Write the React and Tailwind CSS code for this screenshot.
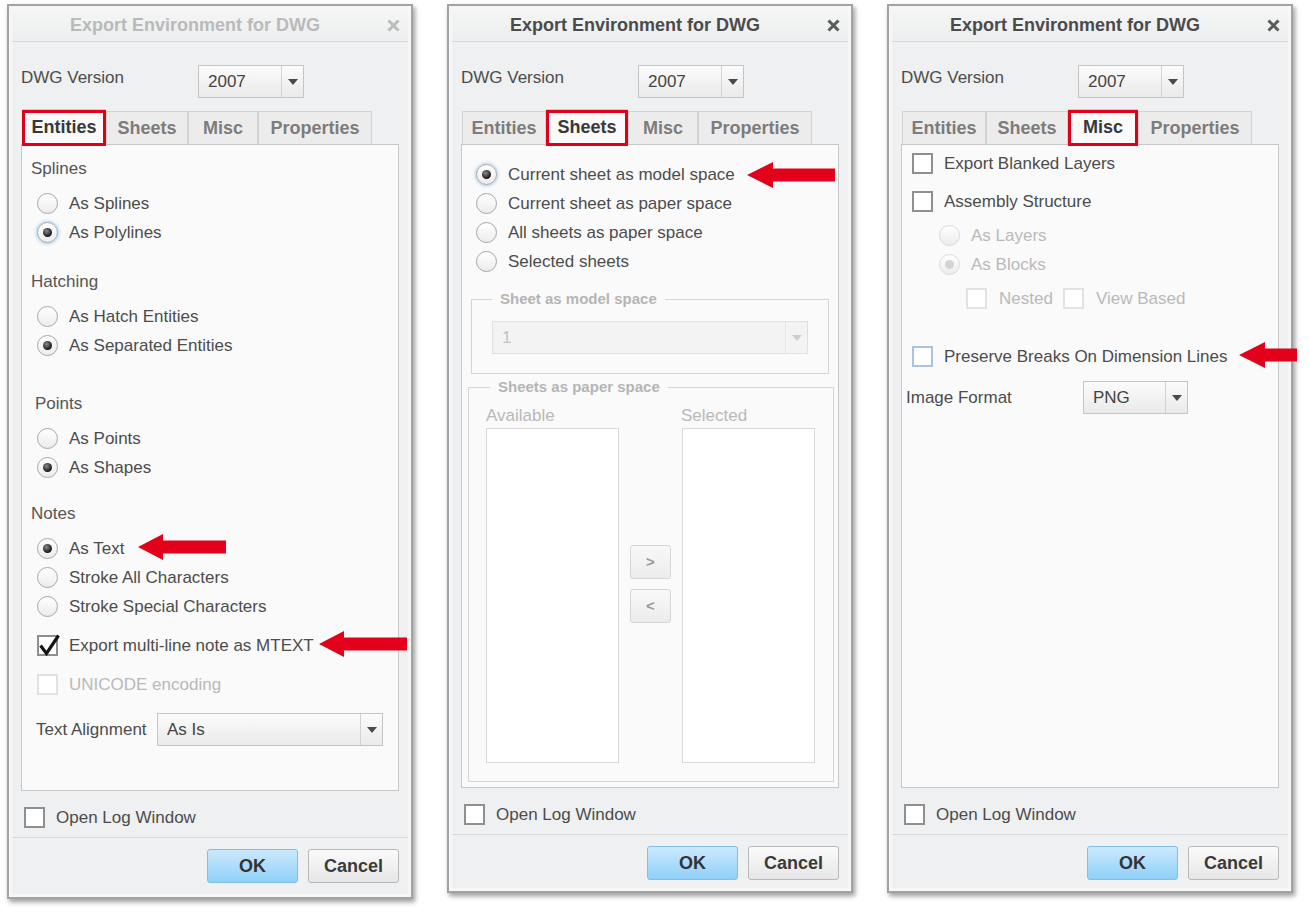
import React from 'react'

const FONT = "font-['Liberation_Sans',Arial,sans-serif]"
const TABS = ['Entities', 'Sheets', 'Misc', 'Properties']
const TAB_W = { Entities: 'w-[84px]', Sheets: 'w-[82px]', Misc: 'w-[70px]', Properties: 'w-[114px]' }

const Triangle = ({ color = '#4a4a4a' }) => (
  <svg width="10" height="6" viewBox="0 0 10 6">
    <polygon points="0,0 10,0 5,6" fill={color} />
  </svg>
)

function Select({ value, className = '', disabled }) {
  return (
    <div
      className={`flex h-[33px] shrink-0 border ${
        disabled ? 'border-[#e0e0e0] bg-[#f3f3f3]' : 'border-[#c5c5c5] bg-linear-to-b from-[#fbfbfb] to-[#eaeaea]'
      } ${className}`}
    >
      <span className={`flex-1 pl-[9px] text-[17px] leading-[31px] ${disabled ? 'text-[#c2c2c2]' : 'text-[#444]'}`}>
        {value}
      </span>
      <span className={`flex w-[22px] items-center justify-center border-l ${disabled ? 'border-[#e4e4e4]' : 'border-[#d2d2d2]'}`}>
        <Triangle color={disabled ? '#cdcdcd' : '#4a4a4a'} />
      </span>
    </div>
  )
}

function Radio({ checked, focused, disabled }) {
  return (
    <span
      className={`flex h-[21px] w-[21px] shrink-0 items-center justify-center rounded-full border bg-linear-to-b from-white to-[#ececec] ${
        disabled ? 'border-[#dadada]' : 'border-[#a6a6a6]'
      } ${focused ? 'shadow-[0_0_3px_1px_rgba(120,185,235,0.6)]' : ''}`}
    >
      {checked && (
        <span
          className={`h-[9px] w-[9px] rounded-full ${
            disabled ? 'bg-[#d4d4d4]' : 'bg-[radial-gradient(circle_at_40%_35%,#8a8a8a,#151515_70%)]'
          }`}
        />
      )}
    </span>
  )
}

function Checkbox({ checked, disabled, focused }) {
  return (
    <span
      className={`relative block h-[21px] w-[21px] shrink-0 border-2 bg-white ${
        disabled ? 'border-[#e2e2e2]' : focused ? 'border-[#a8c4de]' : 'border-[#8f8f8f]'
      }`}
    >
      {checked && (
        <svg className="absolute -left-[2px] -top-[2px] overflow-visible" width="21" height="21" viewBox="0 0 21 21">
          <path d="M3.5 10.5 L9.5 18.5 L21.5 0.5" fill="none" stroke="#151515" strokeWidth="3.2" />
        </svg>
      )}
    </span>
  )
}

function RadioRow({ label, checked, focused, disabled, pl = 'pl-[15px]' }) {
  return (
    <div className={`flex h-[29px] items-center gap-[11px] ${pl}`}>
      <Radio checked={checked} focused={focused} disabled={disabled} />
      <span className={`text-[17px] ${disabled ? 'text-[#b9b9b9]' : 'text-[#4c4c4c]'}`}>{label}</span>
    </div>
  )
}

function CheckRow({ label, checked, disabled, focused, className = '' }) {
  return (
    <div className={`flex h-[29px] items-center gap-[11px] ${className}`}>
      <Checkbox checked={checked} disabled={disabled} focused={focused} />
      <span className={`text-[17px] ${disabled ? 'text-[#b9b9b9]' : 'text-[#4c4c4c]'}`}>{label}</span>
    </div>
  )
}

const Header = ({ children, className = '' }) => (
  <div className={`flex h-[29px] items-center text-[17px] text-[#555] ${className}`}>{children}</div>
)

function Tabs({ active }) {
  return (
    <div className="mt-[13px] flex h-[33px] items-end pl-px">
      {TABS.map((t) =>
        t === active ? (
          <div
            key={t}
            className={`relative z-10 -mb-px flex h-[36px] ${TAB_W[t]} items-center justify-center border border-b-0 border-[#cfcfcf] bg-[#fafafa] text-[18px] font-bold text-[#383838]`}
          >
            {t}
            <span className="absolute -left-px -right-px top-0 -bottom-px border-[3px] border-[#e1001a]" />
          </div>
        ) : (
          <div
            key={t}
            className={`flex h-[33px] ${TAB_W[t]} items-center justify-center border border-b-0 border-[#d3d3d3] bg-[#ececec] text-[18px] font-bold text-[#7c7c7c]`}
          >
            {t}
          </div>
        ),
      )}
    </div>
  )
}

function Dialog({ active, tab, panelH, footerPb = 'pb-[8px]', children }) {
  return (
    <div className="flex w-[406px] shrink-0 flex-col self-start border-2 border-[#a3a3a3] bg-[#f7f7f7] p-[3px] shadow-[2px_3px_5px_rgba(0,0,0,0.4)]">
      <div className="flex flex-col bg-[#eef0f1]">
        <div className="flex h-[33px] items-center border-b border-[#d7d7d7] bg-linear-to-b from-[#f5f5f5] to-[#eceeef]">
          <span className={`flex-1 text-center text-[18px] font-bold ${active ? 'text-[#4b4b4b]' : 'text-[#bababa]'}`}>
            Export Environment for DWG
          </span>
          <span className="flex w-[30px] items-center justify-center">
            <svg width="13" height="13" viewBox="0 0 13 13">
              <path d="M1.5 1.5 L11.5 11.5 M11.5 1.5 L1.5 11.5" stroke={active ? '#5a5a5a' : '#bcbcbc'} strokeWidth="3" />
            </svg>
          </span>
        </div>

        <div className="px-[9px]">
          <div className="mt-[23px] flex items-start">
            <span className="w-[177px] pt-[3px] text-[17px] leading-[20px] text-[#4c4c4c]">DWG Version</span>
            <Select value="2007" className="w-[106px]" />
          </div>

          <Tabs active={tab} />

          <div className={`flex flex-col border border-[#c8c8c8] bg-[#fafafa] ${panelH}`}>{children}</div>

          <CheckRow label="Open Log Window" className="ml-[3px] mt-[12px]" />
        </div>

        <div className="mt-[5px] border-t border-[#d9d9d9]" />

        <div className={`flex justify-end gap-[10px] px-[9px] pt-[11px] ${footerPb}`}>
          <button className="h-[34px] w-[91px] rounded-[3px] border border-[#80bfe8] bg-linear-to-b from-[#cbe9fd] to-[#8fd0f8] text-[18px] font-bold text-[#333]">
            OK
          </button>
          <button className="h-[34px] w-[91px] rounded-[3px] border border-[#b9b9b9] bg-linear-to-b from-[#fbfbfb] to-[#e6e6e6] text-[18px] font-bold text-[#3a3a3a]">
            Cancel
          </button>
        </div>
      </div>
    </div>
  )
}

function EntitiesPanel() {
  return (
    <div className="pt-[9px]">
      <Header className="pl-[9px]">Splines</Header>
      <div className="mt-[6px]">
        <RadioRow label="As Splines" />
        <RadioRow label="As Polylines" checked focused />
      </div>
      <Header className="mt-[20px] pl-[9px]">Hatching</Header>
      <div className="mt-[6px]">
        <RadioRow label="As Hatch Entities" />
        <RadioRow label="As Separated Entities" checked />
      </div>
      <Header className="mt-[29px] pl-[13px]">Points</Header>
      <div className="mt-[6px]">
        <RadioRow label="As Points" />
        <RadioRow label="As Shapes" checked />
      </div>
      <Header className="mt-[17px] pl-[9px]">Notes</Header>
      <div className="mt-[6px]">
        <RadioRow label="As Text" checked />
        <RadioRow label="Stroke All Characters" />
        <RadioRow label="Stroke Special Characters" />
      </div>
      <CheckRow label="Export multi-line note as MTEXT" checked className="mt-[10px] pl-[15px]" />
      <CheckRow label="UNICODE encoding" disabled className="mt-[10px] pl-[15px]" />
      <div className="mt-[14px] flex items-center pl-[14px]">
        <span className="w-[121px] text-[17px] text-[#4c4c4c]">Text Alignment</span>
        <Select value="As Is" className="w-[226px]" />
      </div>
    </div>
  )
}

function SheetsPanel() {
  return (
    <div className="pt-[15px]">
      <RadioRow pl="pl-[14px]" label="Current sheet as model space" checked focused />
      <RadioRow pl="pl-[14px]" label="Current sheet as paper space" />
      <RadioRow pl="pl-[14px]" label="All sheets as paper space" />
      <RadioRow pl="pl-[14px]" label="Selected sheets" />

      <fieldset className="mx-[9px] mt-[14px] border border-[#d5d5d5] px-[20px] pb-[19px]">
        <legend className="px-[8px] text-[15px] font-bold leading-[18px] text-[#b5b5b5]">Sheet as model space</legend>
        <Select value="1" disabled className="mt-[13px] w-full" />
      </fieldset>

      <fieldset className="ml-[6px] mr-[4px] mt-[4px] border border-[#d5d5d5] pb-[18px] pl-[17px] pr-[18px]">
        <legend className="ml-[4px] px-[8px] text-[15px] font-bold leading-[18px] text-[#b5b5b5]">
          Sheets as paper space
        </legend>
        <div className="mt-[10px] flex h-[20px] items-center text-[17px] text-[#b9b9b9]">
          <span className="w-[195px]">Available</span>
          <span>Selected</span>
        </div>
        <div className="mt-[2px] flex h-[335px]">
          <div className="w-[133px] border border-[#d9d9d9] bg-white" />
          <div className="flex flex-1 flex-col items-center gap-[10px] pt-[117px]">
            <button className="h-[34px] w-[41px] rounded-[3px] border border-[#d6d6d6] bg-linear-to-b from-[#f8f8f8] to-[#ececec] text-[15px] font-bold text-[#9a9a9a]">
              &gt;
            </button>
            <button className="h-[34px] w-[41px] rounded-[3px] border border-[#d6d6d6] bg-linear-to-b from-[#f8f8f8] to-[#ececec] text-[15px] font-bold text-[#9a9a9a]">
              &lt;
            </button>
          </div>
          <div className="w-[133px] border border-[#d9d9d9] bg-white" />
        </div>
      </fieldset>
    </div>
  )
}

function MiscPanel() {
  return (
    <div className="pt-[4px]">
      <CheckRow label="Export Blanked Layers" className="pl-[10px]" />
      <CheckRow label="Assembly Structure" className="mt-[9px] pl-[10px]" />
      <div className="mt-[5px]">
        <RadioRow pl="pl-[37px]" label="As Layers" disabled />
        <RadioRow pl="pl-[37px]" label="As Blocks" disabled checked />
      </div>
      <div className="mt-[5px] flex h-[29px] items-center pl-[64px]">
        <Checkbox disabled />
        <span className="ml-[12px] text-[17px] text-[#b9b9b9]">Nested</span>
        <span className="ml-[10px]">
          <Checkbox disabled />
        </span>
        <span className="ml-[12px] text-[17px] text-[#b9b9b9]">View Based</span>
      </div>
      <CheckRow label="Preserve Breaks On Dimension Lines" focused className="mt-[29px] pl-[10px]" />
      <div className="mt-[10px] flex items-center pl-[4px]">
        <span className="w-[177px] text-[17px] text-[#4c4c4c]">Image Format</span>
        <Select value="PNG" className="w-[105px]" />
      </div>
    </div>
  )
}

function Arrow({ tip, base, end, y }) {
  const w = end - tip
  return (
    <svg
      className="pointer-events-none absolute"
      style={{ left: tip, top: y - 13 }}
      width={w}
      height="26"
      viewBox={`0 0 ${w} 26`}
    >
      <polygon
        points={`0,13 ${base - tip},0 ${base - tip},6.5 ${w},6.5 ${w},19.5 ${base - tip},19.5 ${base - tip},26`}
        fill="#e2001a"
      />
    </svg>
  )
}

export default function App() {
  return (
    <div className={`relative flex h-[912px] w-[1309px] gap-[34px] overflow-hidden bg-white pl-[7px] pt-[4px] ${FONT}`}>
      <Dialog tab="Entities" panelH="h-[647px]" footerPb="pb-[11px]">
        <EntitiesPanel />
      </Dialog>
      <Dialog active tab="Sheets" panelH="h-[644px]">
        <SheetsPanel />
      </Dialog>
      <Dialog active tab="Misc" panelH="h-[644px]">
        <MiscPanel />
      </Dialog>

      <Arrow tip={138} base={163} end={226} y={547} />
      <Arrow tip={319} base={344} end={407} y={644} />
      <Arrow tip={747} base={773} end={835} y={175} />
      <Arrow tip={1239} base={1265} end={1297} y={355} />
    </div>
  )
}
